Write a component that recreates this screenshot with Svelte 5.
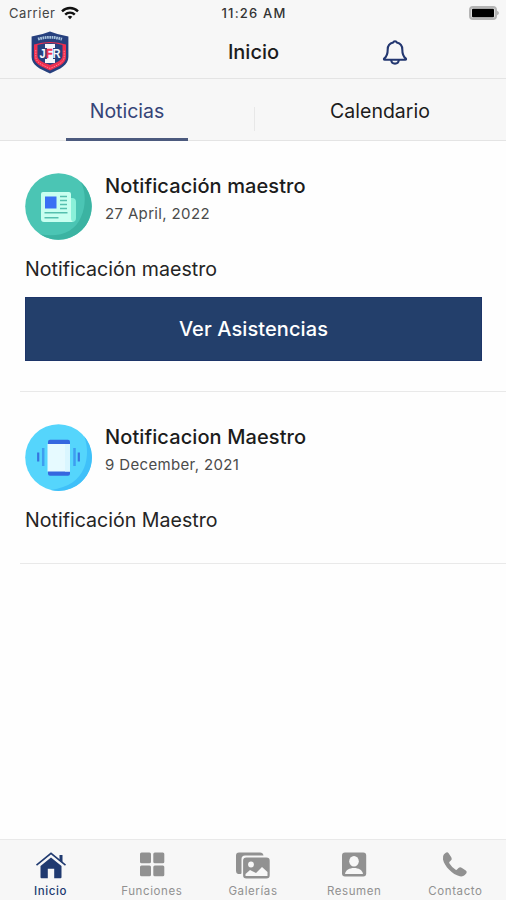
<script>
	let activeTab = 'noticias';
	let activePage = 'inicio';

	const tabs = [
		{ id: 'noticias', label: 'Noticias' },
		{ id: 'calendario', label: 'Calendario' }
	];

	const noticias = [
		{
			icon: 'news',
			title: 'Notificación maestro',
			date: '27 April, 2022',
			body: 'Notificación maestro',
			action: 'Ver Asistencias'
		},
		{
			icon: 'phone',
			title: 'Notificacion Maestro',
			date: '9 December, 2021',
			body: 'Notificación Maestro'
		}
	];

	const pages = [
		{ id: 'inicio', label: 'Inicio' },
		{ id: 'funciones', label: 'Funciones' },
		{ id: 'galerias', label: 'Galerías' },
		{ id: 'resumen', label: 'Resumen' },
		{ id: 'contacto', label: 'Contacto' }
	];
</script>

<div class="app">
	<header>
		<div class="status">
			<div class="carrier">
				<span>Carrier</span>
				<svg width="18" height="14" viewBox="0 0 18 14" fill="none" stroke="#111" stroke-width="2.4">
					<path d="M1 5.3a11.4 11.4 0 0 1 16 0" />
					<path d="M4.2 8.6a6.8 6.8 0 0 1 9.6 0" />
					<path d="M9 13.2l-2.3-2.4a3.3 3.3 0 0 1 4.6 0z" fill="#111" stroke="none" />
				</svg>
			</div>
			<span class="time">11:26 AM</span>
			<svg class="battery" width="30" height="14" viewBox="0 0 30 14">
				<rect x="1" y="1" width="26" height="12" rx="3" fill="#dcdcdc" stroke="#b5b5b5" stroke-width="2" />
				<rect x="3" y="2.8" width="22" height="8.4" rx="1" fill="#000" />
				<path d="M28 4.7q2 .7 2 2.3t-2 2.3z" fill="#b5b5b5" />
			</svg>
		</div>

		<div class="nav">
			<svg class="crest" width="38" height="43" viewBox="0 0 38 43">
				<path d="M.6 5.5Q11 4 19 .6q8 3.4 18.400 4.900v20.500c0 8-8 12-18.400 16.400C8.600 38 .6 34 .6 26z" fill="#26407e" />
				<path d="M3 13.500q16-5 32 0v12.500c0 6.500-7 9.500-16 13.400C10 35.500 3 32.500 3 26z" fill="#ee2f4f" />
				<path d="M6.500 14q12.500-4 25 0v10.500c0 5-6 7-12.500 9.500-6.500-2.500-12.500-4.500-12.500-9.500z" fill="#27417f" />
				<path d="M7 8.200q12-3.800 24 0" fill="none" stroke="#a9c3dc" stroke-width="2.800" stroke-dasharray="1.700 .6" />
				<path d="M4.800 19v7c0 5 6 8 14.200 11.400C27.200 34 33.200 31 33.200 26v-7" fill="none" stroke="#ff8496" stroke-width="1" stroke-dasharray="1.500 1" />
				<path d="M14 13h10v4h-2v11H24v4H14v-4h2V17H14z" fill="#f4f7fb" />
				<text x="8.500" y="27" textLength="21" lengthAdjust="spacingAndGlyphs">J<tspan fill="#ed3151" stroke="#ed3151" stroke-width=".5">F</tspan>R</text>
			</svg>
			<h1>Inicio</h1>
			<button class="bell" aria-label="Notificaciones">
				<svg width="26" height="26" viewBox="0 0 26 26" fill="none" stroke="#233770" stroke-width="2.1" stroke-linejoin="round">
					<path d="M13 2.200c-1 0-1.600.5-1.800 1.300C7.600 4.300 5.700 7 5.700 10.500c0 5.500-1.200 7.300-3.400 8.900-.6.500-.5 1.400.4 1.400h20.600c.9 0 1-.9.400-1.400-2.200-1.600-3.400-3.400-3.400-8.900 0-3.500-1.900-6.200-5.500-7-.2-.8-.8-1.300-1.800-1.300z" />
					<path d="M9.200 21c.2 2.400 1.700 3.600 3.800 3.600s3.600-1.200 3.800-3.600" />
				</svg>
			</button>
		</div>

		<div class="tabs">
			{#each tabs as tab}
				<button class="tab" class:active={activeTab === tab.id} on:click={() => (activeTab = tab.id)}>
					<span>{tab.label}</span>
				</button>
			{/each}
		</div>
	</header>

	<main>
		{#each noticias as noticia}
			<article>
				<div class="heading">
					{#if noticia.icon === 'news'}
						<svg width="67" height="67" viewBox="0 0 67 67">
							<circle cx="33.500" cy="33.500" r="33.300" fill="#4bc5b4" />
							<path d="M56 9A33.300 33.300 0 0 1 15 61.200C34 65 50 59 56 44 61 32 61 20 56 9z" fill="#3bb3a2" />
							<path d="M43 25h4q4 0 4 4v16q0 4-4 4h-6z" fill="#8af0d9" />
							<path d="M18 19h26q2 0 2 2v24q0 4 3 4H19q-3 0-3-3V21q0-2 2-2z" fill="#c8fff0" />
							<rect x="20" y="23.500" width="11.500" height="12" fill="#3970f4" />
							<path d="M35 23.500h7M35 27.500h7M35 31.500h7M35 35.500h7M19.500 39.800h23M19.500 44.700h14" stroke="#54bfae" stroke-width="1.500" />
						</svg>
					{:else}
						<svg width="67" height="67" viewBox="0 0 67 67">
							<circle cx="33.500" cy="33.500" r="33.300" fill="#55d5fc" />
							<path d="M59 12A33.300 33.300 0 0 1 26 66C44 63 54 56 59 44 63 34 63 22 59 12z" fill="#3fc0f9" />
							<rect x="23" y="15.800" width="22" height="36" rx="2" fill="#3567df" />
							<rect x="22.500" y="20" width="22.500" height="27.500" fill="#e6faff" />
							<path d="M40 20h5v27.500h-5z" fill="#d9f6ff" />
							<path d="M18.200 24v18M49.500 24v18" stroke="#3e9df0" stroke-width="2.500" />
							<path d="M13.200 28.500v9M53.800 28.500v9" stroke="#3674df" stroke-width="2.200" />
						</svg>
					{/if}
					<div class="meta">
						<h2>{noticia.title}</h2>
						<time>{noticia.date}</time>
					</div>
				</div>
				<p>{noticia.body}</p>
				{#if noticia.action}
					<button class="action">{noticia.action}</button>
				{/if}
			</article>
		{/each}
	</main>

	<footer>
		{#each pages as page}
			<button class="page" class:active={activePage === page.id} on:click={() => (activePage = page.id)}>
				<svg width="36" height="30" viewBox="0 0 36 30" fill="currentColor">
					{#if page.id === 'inicio'}
						<path d="M18 7.500L28.500 16v11.300q0 1-1 1h-6.300V18.700h-6.400v9.600H8.500q-1 0-1-1V16z" />
						<path d="M3.500 15.200L18 3.300l14.500 11.900" fill="none" stroke="currentColor" stroke-width="1.600" />
						<path d="M26.500 5h3v7.500l-3-2.500z" />
					{:else if page.id === 'funciones'}
						<rect x="6" y="2.500" width="11" height="10.800" rx="1.500" />
						<rect x="19.300" y="2.500" width="11" height="10.800" rx="1.500" />
						<rect x="6" y="15.500" width="11" height="10.800" rx="1.500" />
						<rect x="19.300" y="15.500" width="11" height="10.800" rx="1.500" />
					{:else if page.id === 'galerias'}
						<path d="M3 24q-2-.5-2-3V5.500q0-3 3-3h21q3 0 3.500 3H10q-3.500 0-3.500 3.500v14q0 1-1 1z" />
						<rect x="8.900" y="8.300" width="25" height="19.500" rx="2.500" stroke="currentColor" stroke-width="1.600" />
						<circle cx="16" cy="14.500" r="2.900" fill="#f7f7f7" />
						<path d="M10.500 26v-2l4.500-4 3 1.500 3 1.500 6-6 5.500 5v4z" fill="#f7f7f7" />
					{:else if page.id === 'resumen'}
						<rect x="6" y="2.500" width="24.200" height="24" rx="3" />
						<ellipse cx="18" cy="11.200" rx="4.800" ry="5.200" fill="#f7f7f7" />
						<path d="M9 24c.5-4 4.500-6 9-6s8.500 2 9 6z" fill="#f7f7f7" />
					{:else}
						<path d="M7 4.200l1.800-1.500q1.700-1 3 .7l2.600 4q1 1.800-.5 3.200l-1.600 1.500q-.3.600.2 1.400 2.300 3.800 6.200 6.200.7.400 1.300-.1l1.500-1.500q1.400-1.300 3.100-.4l4.200 2.700q1.600 1.200.6 2.900L27.800 25q-1.800 1.900-5 1.300C15.500 24.500 7.500 16.500 6 9.500Q5.300 6 7 4.200z" />
					{/if}
				</svg>
				<span>{page.label}</span>
			</button>
		{/each}
	</footer>
</div>

<style>
	:global(body) {
		margin: 0;
		background: #fff;
	}

	.app {
		height: 900px;
		display: flex;
		flex-direction: column;
		overflow: hidden;
		background: #fefefe;
		color: #1c1c1c;
		font-family: Inter, "Liberation Sans", sans-serif;
	}

	button {
		padding: 0;
		border: none;
		background: none;
		font-family: inherit;
		cursor: pointer;
	}

	header {
		background: #f7f7f7;
	}

	.status {
		height: 26px;
		display: grid;
		grid-template-columns: 1fr auto 1fr;
		align-items: center;
		padding: 0 7px 0 9px;
		font-size: 13px;
		color: #444;
	}

	.carrier {
		display: flex;
		align-items: center;
		gap: 6px;
		letter-spacing: 0.55px;
	}

	.time {
		font-weight: 500;
		letter-spacing: 1.2px;
		color: #333;
	}

	.battery {
		justify-self: end;
	}

	.nav {
		height: 52px;
		display: grid;
		grid-template-columns: 1fr 1fr 1fr;
		align-items: center;
		border-bottom: 1px solid #e4e4e4;
	}

	.crest {
		margin-left: 31px;
	}

	.crest text {
		font-family: "Liberation Sans", sans-serif;
		font-size: 13px;
		font-weight: bold;
		fill: #f6f8fc;
	}

	h1 {
		margin: 0;
		text-align: center;
		text-indent: 1px;
		font-size: 20px;
		font-weight: 500;
	}

	.bell {
		justify-self: start;
		margin-left: 45px;
		height: 26px;
	}

	.tabs {
		height: 61px;
		display: flex;
		border-bottom: 1px solid #e4e4e4;
	}

	.tab {
		flex: 1;
		display: flex;
		justify-content: center;
		padding-left: 1px;
		font-size: 19.5px;
		color: #1c1c1c;
	}

	.tab span {
		width: 122px;
		height: 59px;
		line-height: 65px;
		border-bottom: 3px solid transparent;
	}

	.tab:last-child {
		background: linear-gradient(#e8e8e8, #e8e8e8) 1px 28px / 1px 24px no-repeat;
	}

	.tab.active {
		color: #354477;
	}

	.tab.active span {
		border-color: #4c5a7e;
	}

	main {
		flex: 1;
	}

	article {
		margin-left: 20px;
		padding: 32px 24px 30px 5px;
		border-bottom: 1px solid #e9e9e9;
	}

	.heading {
		display: flex;
		gap: 13px;
		height: 67px;
	}

	h2 {
		margin: 0;
		font-size: 20px;
		line-height: 26px;
		font-weight: 500;
		letter-spacing: 0.1px;
	}

	time {
		display: block;
		margin-top: 5px;
		font-size: 15px;
		line-height: 20px;
		letter-spacing: 0.35px;
		color: #4b4b4b;
	}

	p {
		margin: 16px 0 0;
		font-size: 19.6px;
		line-height: 26px;
		color: #252525;
	}

	.action {
		display: block;
		width: 100%;
		height: 64px;
		margin-top: 15px;
		border: 1px solid #1d3569;
		background: #233f6b;
		color: #fff;
		font-size: 20px;
		font-weight: 500;
		letter-spacing: 0.1px;
	}

	footer {
		height: 60px;
		display: flex;
		border-top: 1px solid #e9e9e9;
		background: #f7f7f7;
	}

	.page {
		flex: 1;
		display: flex;
		flex-direction: column;
		align-items: center;
		padding-top: 10px;
		font-size: 11.5px;
		line-height: 14px;
		letter-spacing: 0.6px;
		color: #919191;
	}

	.page span {
		margin-top: 4px;
	}

	.page.active {
		color: #203a70;
		font-weight: 500;
	}
</style>
